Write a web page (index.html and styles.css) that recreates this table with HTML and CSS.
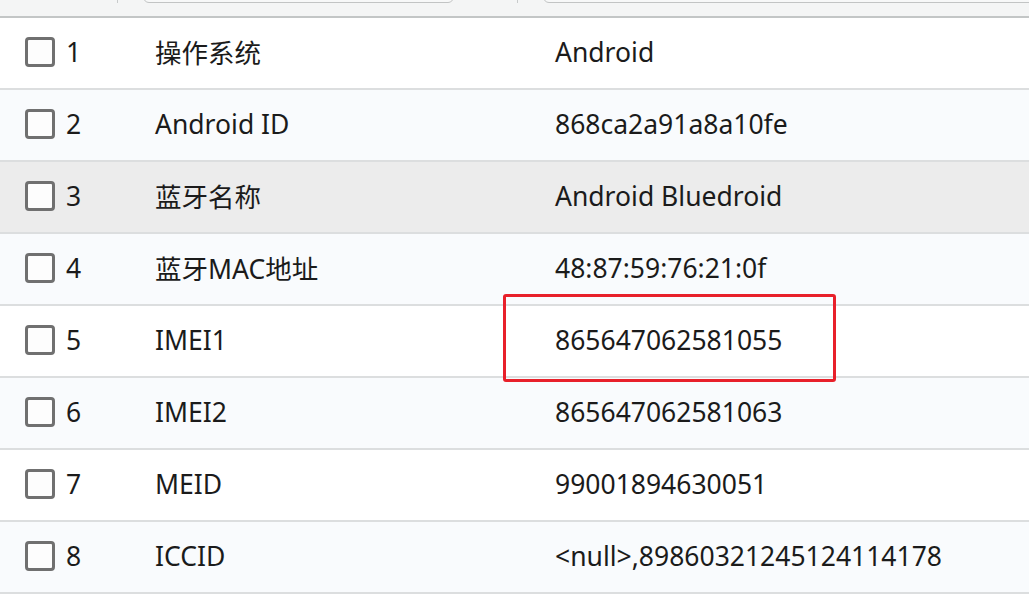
FILE: index.html
```html
<!DOCTYPE html>
<html lang="zh-CN">
<head>
  <meta charset="UTF-8" />
  <title>设备信息</title>
  <link rel="stylesheet" href="styles.css">
</head>
<body>

  <div class="toolbar">
    <span class="sep"></span>
    <span class="search search-name"></span>
    <span class="sep"></span>
    <span class="search search-value"></span>
  </div>

  <div class="list">
    <div class="row">
      <span class="check"></span><span class="num">1</span>
      <span class="name">操作系统</span>
      <span class="value">Android</span>
    </div>
    <div class="row">
      <span class="check"></span><span class="num">2</span>
      <span class="name">Android ID</span>
      <span class="value">868ca2a91a8a10fe</span>
    </div>
    <div class="row hover">
      <span class="check"></span><span class="num">3</span>
      <span class="name">蓝牙名称</span>
      <span class="value">Android Bluedroid</span>
    </div>
    <div class="row">
      <span class="check"></span><span class="num">4</span>
      <span class="name">蓝牙MAC地址</span>
      <span class="value">48:87:59:76:21:0f</span>
    </div>
    <div class="row">
      <span class="check"></span><span class="num">5</span>
      <span class="name">IMEI1</span>
      <span class="value">865647062581055</span>
    </div>
    <div class="row">
      <span class="check"></span><span class="num">6</span>
      <span class="name">IMEI2</span>
      <span class="value">865647062581063</span>
    </div>
    <div class="row">
      <span class="check"></span><span class="num">7</span>
      <span class="name">MEID</span>
      <span class="value">99001894630051</span>
    </div>
    <div class="row">
      <span class="check"></span><span class="num">8</span>
      <span class="name">ICCID</span>
      <span class="value">&lt;null&gt;,89860321245124114178</span>
    </div>

    <div class="mark"></div>
  </div>

</body>
</html>
```

FILE: styles.css
```css
* {
  box-sizing: border-box;
}

body {
  margin: 0;
  background: #ffffff;
  font-family: "Noto Sans", "Noto Sans CJK SC", sans-serif;
  color: #1b1b1b;
  overflow: hidden;
}

.toolbar {
  display: flex;
  align-items: flex-end;
  height: 18px;
  padding-bottom: 13px;
  background: #f4f5f5;
  border-bottom: 2px solid #c3c6c6;
  overflow: hidden;
}

.sep {
  width: 1px;
  height: 10px;
  background: #c8cbcb;
  margin-left: 117px;
}

.sep + .search {
  margin-left: 25px;
}

.search {
  height: 30px;
  border: 1px solid #c2c4c4;
  border-radius: 0 0 6px 6px;
  background: #f7f8f8;
}

.search-name {
  width: 311px;
}

.search-value {
  flex: 1;
  margin-right: -10px;
}

.search-name + .sep {
  margin-left: 63px;
}

.list {
  position: relative;
}

.row {
  display: flex;
  align-items: center;
  height: 72px;
  padding-bottom: 3px;
  border-bottom: 2px solid #dcdedf;
  font-size: 26.5px;
}

.row:nth-child(even) {
  background: #f9fbfd;
}

.row.hover {
  background: #ececec;
}

.check {
  width: 30px;
  height: 30px;
  margin-left: 25px;
  border: 3px solid #707070;
  border-radius: 4px;
  background: #fdfdfd;
}

.num {
  width: 100px;
  padding-left: 11px;
}

.name {
  width: 400px;
}

.mark {
  position: absolute;
  left: 503px;
  top: 276px;
  width: 333px;
  height: 88px;
  border: 3px solid #e8202a;
  border-radius: 3px;
}
```
